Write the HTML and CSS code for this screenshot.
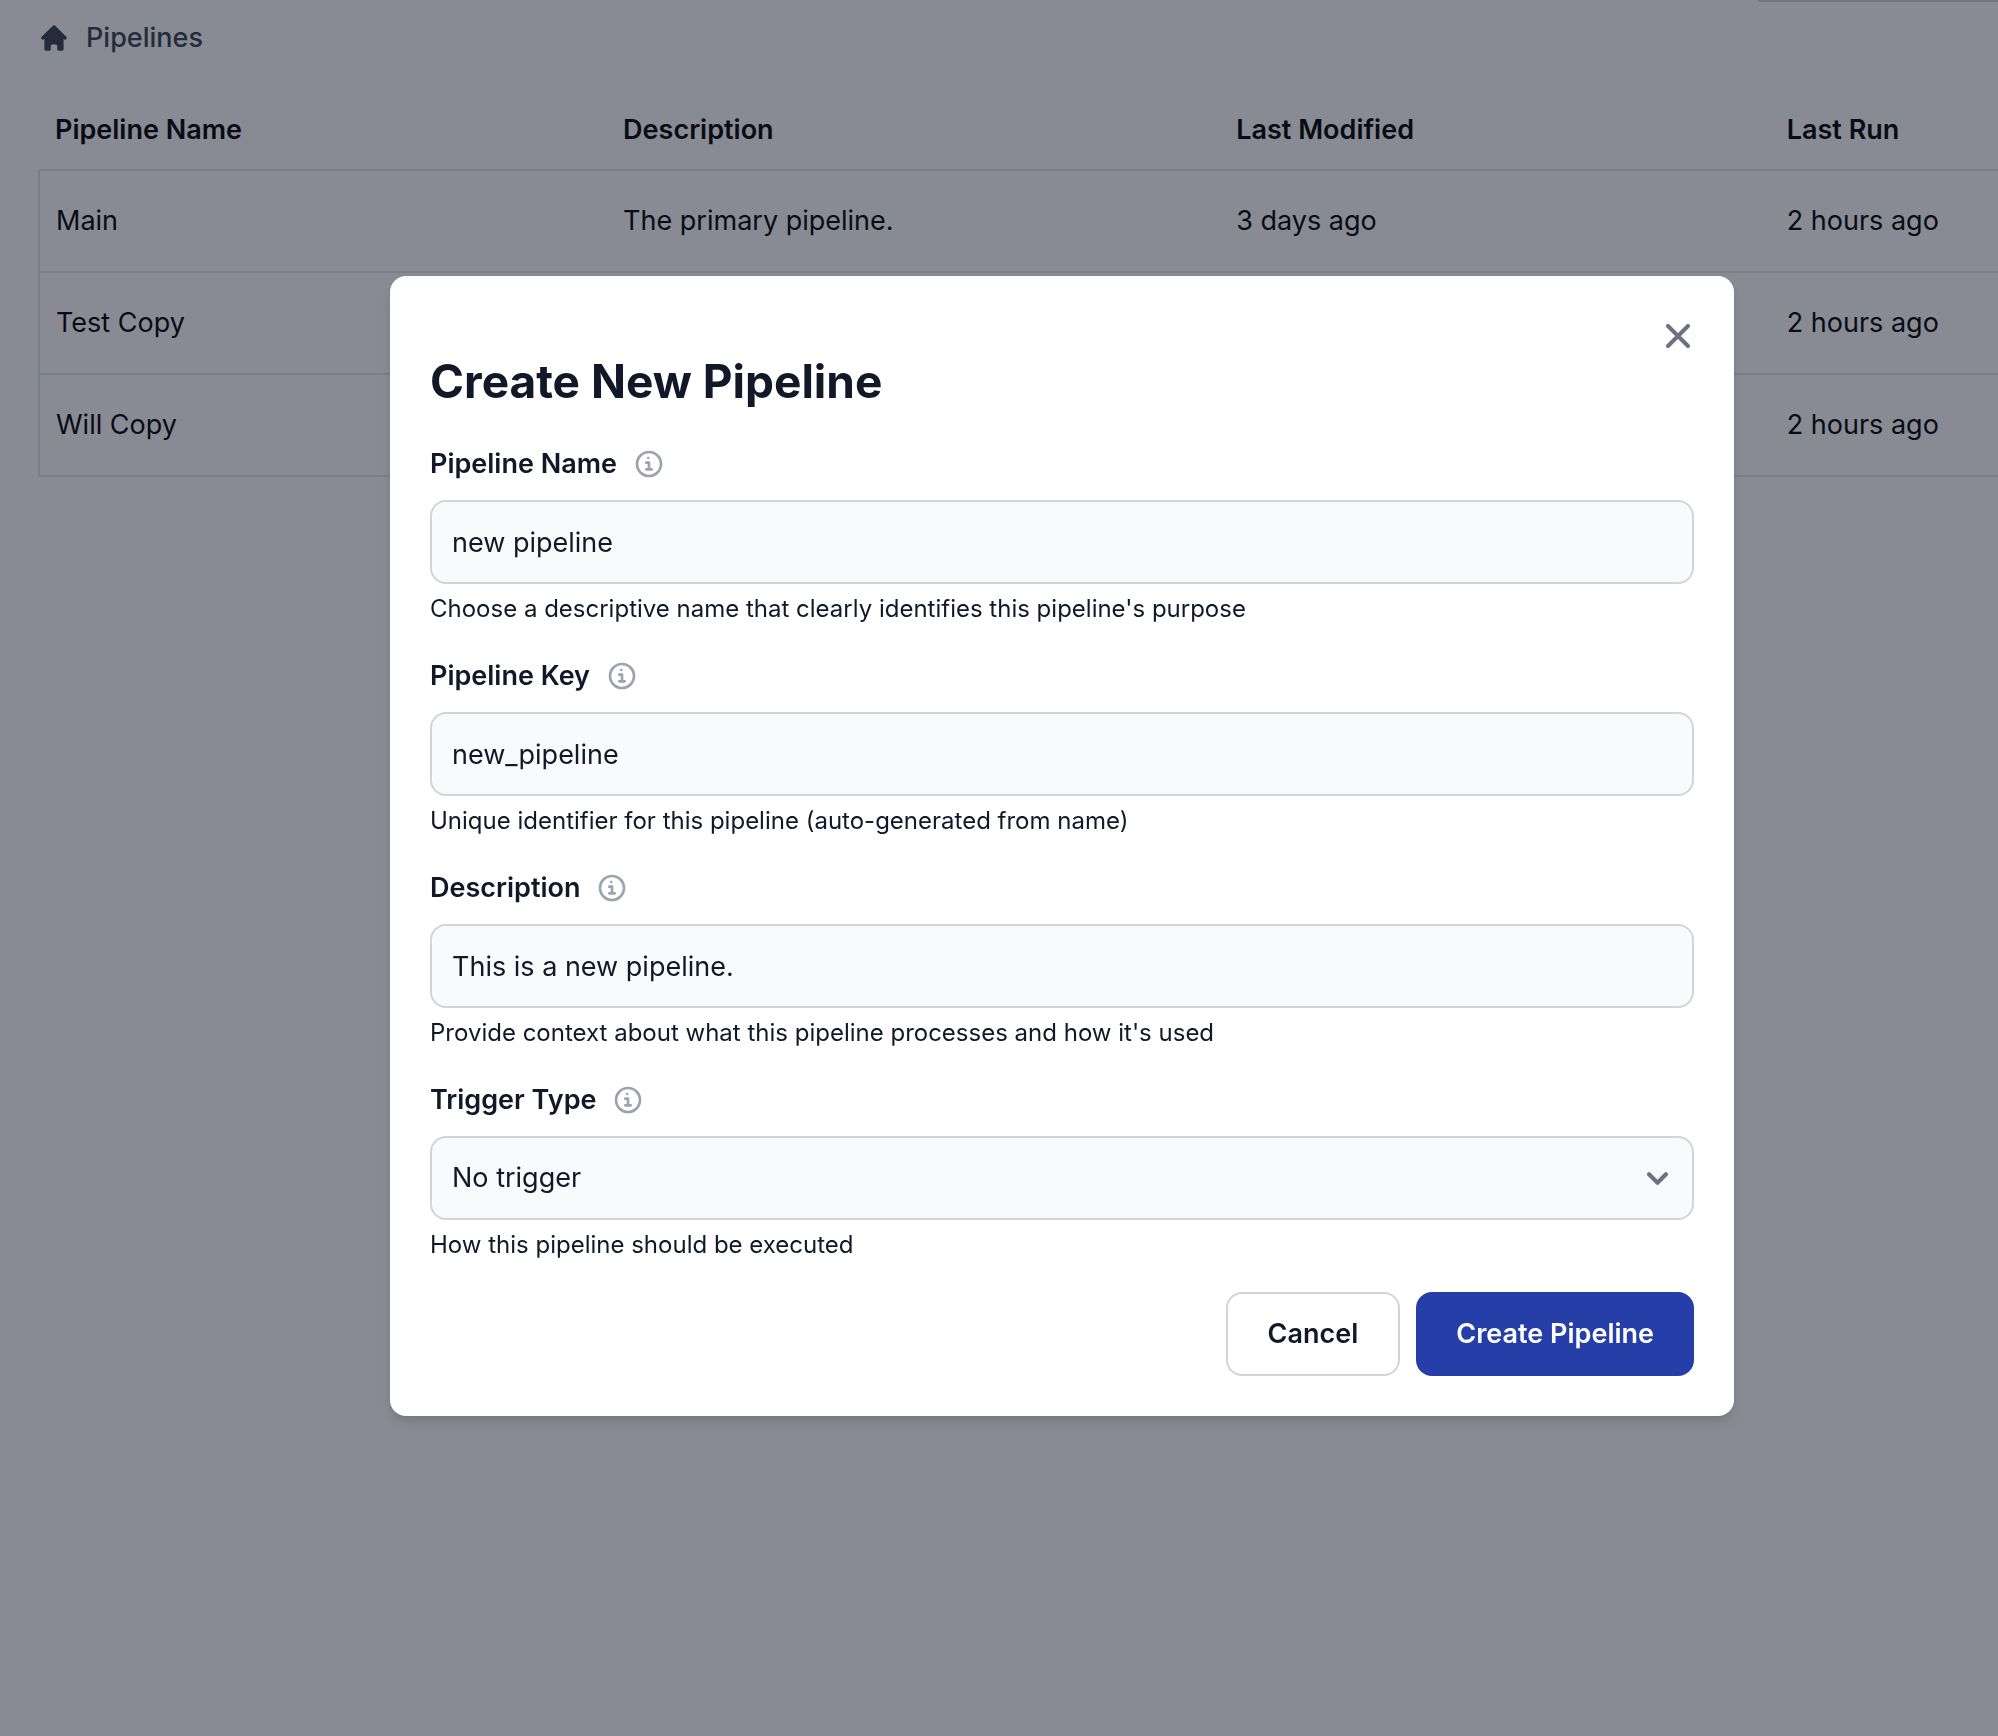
FILE: index.html
```html
<!DOCTYPE html>
<html lang="en">
<head>
<meta charset="utf-8">
<meta name="viewport" content="width=device-width, initial-scale=1">
<title>Pipelines</title>
<link rel="stylesheet" href="styles.css">
</head>
<body>
<svg class="sprite" aria-hidden="true">
  <symbol id="icon-info" viewBox="0 0 24 24">
    <path d="M10 11h2v5m-2 0h4m-2.592-8.5h.01M21 12a9 9 0 1 1-18 0 9 9 0 0 1 18 0Z" fill="none" stroke="currentColor" stroke-width="2" stroke-linecap="round" stroke-linejoin="round"/>
  </symbol>
</svg>

<div class="page">
  <header class="topbar"><div class="topbar-edge"></div></header>
  <nav class="breadcrumb" aria-label="Breadcrumb">
    <svg class="home-icon" viewBox="0 0 20 20" aria-hidden="true"><path fill="currentColor" d="M10.707 2.293a1 1 0 0 0-1.414 0l-7 7a1 1 0 0 0 1.414 1.414L4 10.414V17a1 1 0 0 0 1 1h2a1 1 0 0 0 1-1v-2a1 1 0 0 1 1-1h2a1 1 0 0 1 1 1v2a1 1 0 0 0 1 1h2a1 1 0 0 0 1-1v-6.586l.293.293a1 1 0 0 0 1.414-1.414l-7-7z"/></svg>
    <a class="crumb" href="#">Pipelines</a>
  </nav>
  <table class="pipelines">
    <colgroup>
      <col class="col-name"><col class="col-description"><col class="col-modified"><col>
    </colgroup>
    <thead>
      <tr><th scope="col">Pipeline Name</th><th scope="col">Description</th><th scope="col">Last Modified</th><th scope="col">Last Run</th></tr>
    </thead>
    <tbody>
      <tr><td>Main</td><td>The primary pipeline.</td><td>3 days ago</td><td>2 hours ago</td></tr>
      <tr><td>Test Copy</td><td></td><td></td><td>2 hours ago</td></tr>
      <tr><td>Will Copy</td><td></td><td></td><td>2 hours ago</td></tr>
    </tbody>
  </table>
</div>

<div class="overlay">
  <section class="modal" role="dialog" aria-modal="true" aria-labelledby="modal-title">
    <button class="close" type="button" aria-label="Close">
      <svg class="close-icon" viewBox="0 0 24 24" aria-hidden="true"><path d="M2 2l20 20M22 2L2 22" fill="none" stroke="currentColor" stroke-width="4" stroke-linecap="round"/></svg>
    </button>
    <form class="form">
      <h2 class="title" id="modal-title">Create New Pipeline</h2>

      <div class="field">
        <div class="label-row">
          <label for="name">Pipeline Name</label>
          <svg class="info-icon" aria-hidden="true"><use href="#icon-info"/></svg>
        </div>
        <input class="control" id="name" type="text" value="new pipeline">
        <p class="help">Choose a descriptive name that clearly identifies this pipeline's purpose</p>
      </div>

      <div class="field">
        <div class="label-row">
          <label for="key">Pipeline Key</label>
          <svg class="info-icon" aria-hidden="true"><use href="#icon-info"/></svg>
        </div>
        <input class="control" id="key" type="text" value="new_pipeline">
        <p class="help">Unique identifier for this pipeline (auto-generated from name)</p>
      </div>

      <div class="field">
        <div class="label-row">
          <label for="description">Description</label>
          <svg class="info-icon" aria-hidden="true"><use href="#icon-info"/></svg>
        </div>
        <input class="control" id="description" type="text" value="This is a new pipeline.">
        <p class="help">Provide context about what this pipeline processes and how it's used</p>
      </div>

      <div class="field">
        <div class="label-row">
          <label for="trigger">Trigger Type</label>
          <svg class="info-icon" aria-hidden="true"><use href="#icon-info"/></svg>
        </div>
        <div class="select-wrap">
          <select class="control" id="trigger"><option>No trigger</option></select>
          <svg class="chevron" viewBox="0 0 10 6" aria-hidden="true"><path d="m1 1 4 4 4-4" fill="none" stroke="currentColor" stroke-width="2" stroke-linecap="round" stroke-linejoin="round"/></svg>
        </div>
        <p class="help">How this pipeline should be executed</p>
      </div>

      <div class="actions">
        <button class="button button-secondary" type="button">Cancel</button>
        <button class="button button-primary" type="submit">Create Pipeline</button>
      </div>
    </form>
  </section>
</div>
</body>
</html>
```
FILE: styles.css
```css
*, *::before, *::after {
  box-sizing: border-box;
}

body {
  margin: 0;
  background: #fff;
  color: #000;
  font-family: Inter, "Liberation Sans", sans-serif;
  font-size: 27px;
  line-height: 40px;
}

.sprite {
  display: none;
}

.page {
  min-height: 100vh;
  overflow: hidden;
}

.topbar {
  display: flex;
  justify-content: flex-end;
  height: 2px;
}

.topbar-edge {
  width: 12%;
  background: #d1d5db;
  border-bottom-left-radius: 8px;
}

.breadcrumb {
  display: flex;
  align-items: center;
  gap: 16px;
  padding: 16px 38px 0;
  color: #374151;
}

.home-icon {
  width: 32px;
  height: 32px;
}

.crumb {
  color: inherit;
  font-weight: 500;
  text-decoration: none;
}

.pipelines {
  width: calc(100% - 38px);
  margin: 32px 0 0 38px;
  border-collapse: collapse;
  table-layout: fixed;
}

.col-name {
  width: 29%;
}

.col-description {
  width: 31.3%;
}

.col-modified {
  width: 28.1%;
}

.pipelines th,
.pipelines td {
  padding: 0 16px;
  text-align: left;
  white-space: nowrap;
}

.pipelines th {
  height: 80px;
  font-weight: 600;
}

.pipelines td {
  height: 102px;
  border-top: 2px solid #e5e7eb;
  border-bottom: 2px solid #e5e7eb;
}

.pipelines td:first-child {
  border-left: 2px solid #e5e7eb;
}

.overlay {
  position: fixed;
  inset: 0;
  padding: 276px 264px 0 390px;
  overflow: auto;
  background: rgba(17, 24, 39, 0.5);
}

.modal {
  display: flex;
  flex-direction: column;
  padding: 48px 40px 40px;
  background: #fff;
  border-radius: 16px;
  box-shadow: 0 8px 12px -2px rgba(0, 0, 0, 0.1), 0 4px 8px -4px rgba(0, 0, 0, 0.1);
  color: #111827;
}

.close {
  align-self: flex-end;
  display: flex;
  justify-content: center;
  width: 32px;
  height: 24px;
  padding: 0;
  border: 0;
  background: none;
  color: #6b7280;
}

.close-icon {
  width: 24px;
  height: 24px;
}

.form {
  display: flex;
  flex-direction: column;
  gap: 30px;
}

.title {
  margin: 0;
  font-size: 46px;
  font-weight: 700;
  line-height: 66px;
}

.field {
  display: flex;
  flex-direction: column;
}

.label-row {
  display: flex;
  align-items: center;
  gap: 16px;
  margin-bottom: 16px;
  font-weight: 600;
}

.info-icon {
  width: 32px;
  height: 32px;
  color: #9ca3af;
}

.control {
  width: 100%;
  height: 84px;
  padding: 0 20px;
  border: 2px solid #d1d5db;
  border-radius: 16px;
  background: #f9fafb;
  color: #111827;
  font: inherit;
  appearance: none;
}

.select-wrap {
  display: grid;
  align-items: center;
}

.select-wrap > * {
  grid-area: 1 / 1;
}

.chevron {
  justify-self: end;
  width: 21px;
  height: 13px;
  margin-right: 26px;
  color: #6b7280;
  pointer-events: none;
}

.help {
  margin: 8px 0 0;
  font-size: 24px;
  line-height: 34px;
}

.actions {
  display: flex;
  justify-content: flex-end;
  gap: 16px;
}

.button {
  height: 84px;
  padding: 0 40px;
  border: 0;
  border-radius: 16px;
  font: inherit;
  font-weight: 600;
}

.button-secondary {
  border: 2px solid #d1d5db;
  background: #fff;
  color: #111827;
}

.button-primary {
  background: #263ea8;
  color: #fff;
}
```
